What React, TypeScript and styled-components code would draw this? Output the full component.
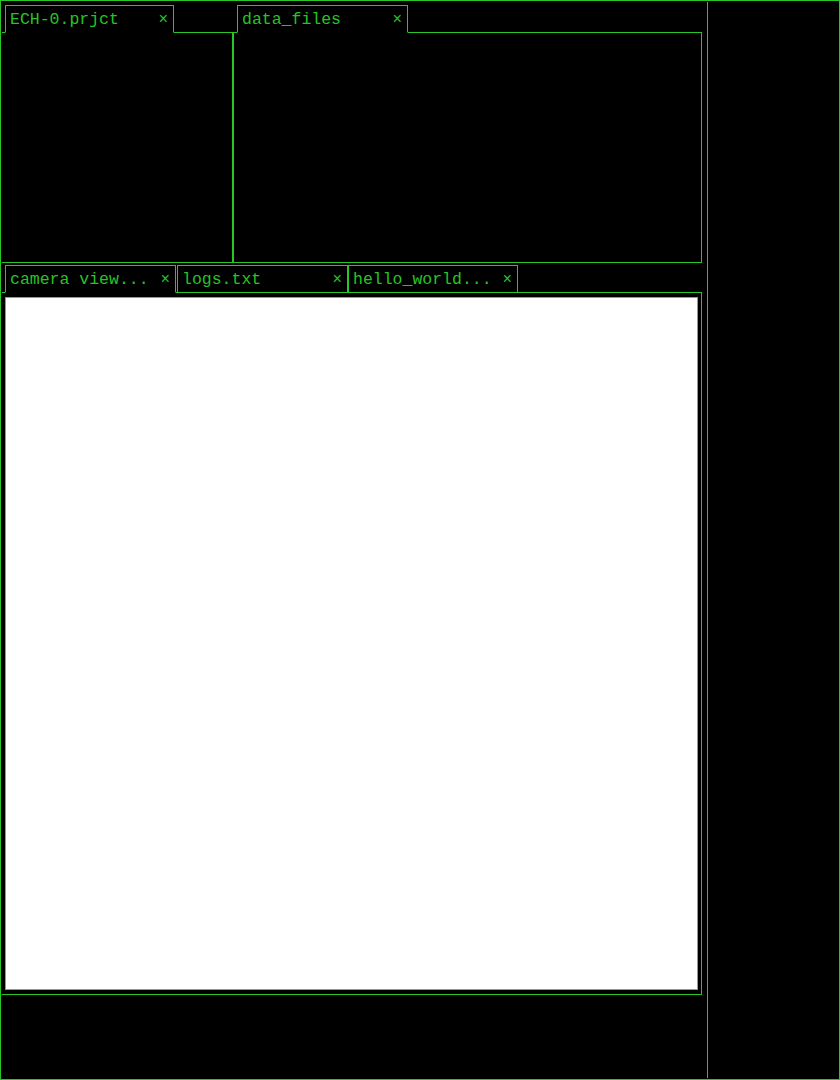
import styled, { createGlobalStyle } from "styled-components";

const GREEN = "#27c727";
const TEXT = "#26c426";

const GlobalStyle = createGlobalStyle`
  html, body {
    margin: 0;
    padding: 0;
    background: #000;
  }
  * {
    box-sizing: border-box;
  }
`;

const Screen = styled.div`
  display: flex;
  width: 840px;
  height: 1080px;
  padding: 1px;
  border: 1px solid ${GREEN};
  background: #000;
  font-family: "Liberation Mono", "DejaVu Sans Mono", monospace;
`;

const Workspace = styled.div`
  display: flex;
  flex-direction: column;
  width: 705px;
  padding: 1px 5px 0 0;
`;

const SideBar = styled.aside`
  flex: 1;
  border-left: 1px solid ${GREEN};
`;

const Row = styled.div`
  display: flex;
`;

const Pane = styled.section<{ $width: number }>`
  display: flex;
  flex-direction: column;
  width: ${({ $width }) => $width}px;
`;

const TabStrip = styled.div<{ $inset: number }>`
  display: flex;
  padding: 2px 0 0 ${({ $inset }) => $inset}px;
`;

const Tab = styled.div<{ $active?: boolean; $width: number; $gap: number }>`
  position: relative;
  z-index: 1;
  display: flex;
  align-items: center;
  justify-content: space-between;
  width: ${({ $width }) => $width}px;
  height: 28px;
  margin: 0 0 -1px ${({ $gap }) => $gap}px;
  padding: 2px 5px 0 4px;
  border: 1px solid ${GREEN};
  border-bottom-color: ${({ $active }) => ($active ? "#000" : GREEN)};
  background: #000;
  color: ${TEXT};
  font-size: 16.5px;
  line-height: 18px;
  white-space: nowrap;
`;

const Close = styled.span`
  font-size: 16px;
  color: ${TEXT};
`;

const Body = styled.div<{ $height: number; $leftBorder?: boolean }>`
  height: ${({ $height }) => $height}px;
  border: 1px solid ${GREEN};
  border-left: ${({ $leftBorder }) => ($leftBorder ? `1px solid ${GREEN}` : "none")};
  padding: 4px 3px 4px 3px;
`;

const Viewport = styled.div`
  height: 100%;
  border: 1px solid #2ee02e;
  background: #fff;
`;

type TabInfo = { label: string; active?: boolean; width?: number; gap?: number };

const TabBar = ({ tabs, inset }: { tabs: TabInfo[]; inset: number }) => (
  <TabStrip $inset={inset}>
    {tabs.map((t) => (
      <Tab key={t.label} $active={t.active} $width={t.width ?? 171} $gap={t.gap ?? 0}>
        <span>{t.label}</span>
        <Close>×</Close>
      </Tab>
    ))}
  </TabStrip>
);

export default function App() {
  return (
    <>
      <GlobalStyle />
      <Screen>
        <Workspace>
          <Row>
            <Pane $width={231}>
              <TabBar inset={3} tabs={[{ label: "ECH-0.prjct", active: true, width: 169 }]} />
              <Body $height={231} />
            </Pane>
            <Pane $width={469}>
              <TabBar inset={4} tabs={[{ label: "data_files", active: true }]} />
              <Body $height={231} $leftBorder />
            </Pane>
          </Row>
          <Pane $width={700}>
            <TabBar
              inset={3}
              tabs={[
                { label: "camera view...", active: true },
                { label: "logs.txt", gap: 1 },
                { label: "hello_world...", width: 170 },
              ]}
            />
            <Body $height={703}>
              <Viewport />
            </Body>
          </Pane>
        </Workspace>
        <SideBar />
      </Screen>
    </>
  );
}
